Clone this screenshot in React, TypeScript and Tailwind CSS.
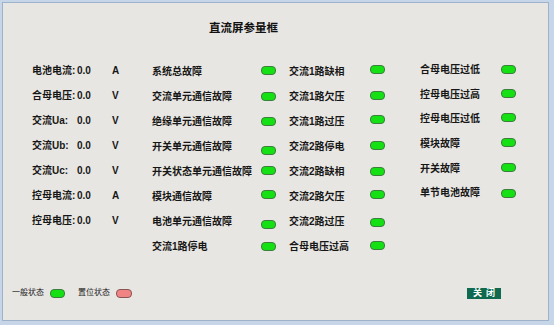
import React from "react";

const font = { fontFamily: '"Liberation Sans", "Noto Sans CJK SC", sans-serif' };

type Led = { label: string; off: string };

const offCls: Record<string, string> = {
  "-2": "-translate-y-[2px]",
  "-1": "-translate-y-[1px]",
  "0": "",
  "1": "translate-y-[1px]",
  "3": "translate-y-[3px]",
  "4": "translate-y-[4px]",
};

const col1 = [
  ["电池电流:", "0.0", "A"],
  ["合母电压:", "0.0", "V"],
  ["交流Ua:", "0.0", "V"],
  ["交流Ub:", "0.0", "V"],
  ["交流Uc:", "0.0", "V"],
  ["控母电流:", "0.0", "A"],
  ["控母电压:", "0.0", "V"],
];

const col2: Led[] = [
  { label: "系统总故障", off: "-1" },
  { label: "交流单元通信故障", off: "0" },
  { label: "绝缘单元通信故障", off: "0" },
  { label: "开关单元通信故障", off: "4" },
  { label: "开关状态单元通信故障", off: "-1" },
  { label: "模块通信故障", off: "-2" },
  { label: "电池单元通信故障", off: "3" },
  { label: "交流1路停电", off: "0" },
];

const col3: Led[] = [
  { label: "交流1路缺相", off: "-2" },
  { label: "交流1路欠压", off: "-1" },
  { label: "交流1路过压", off: "-2" },
  { label: "交流2路停电", off: "-1" },
  { label: "交流2路缺相", off: "0" },
  { label: "交流2路欠压", off: "-2" },
  { label: "交流2路过压", off: "1" },
  { label: "合母电压过高", off: "-1" },
];

const col4: Led[] = [
  { label: "合母电压过低", off: "-1" },
  { label: "控母电压过高", off: "-1" },
  { label: "控母电压过低", off: "-2" },
  { label: "模块故障", off: "-2" },
  { label: "开关故障", off: "-1" },
  { label: "单节电池故障", off: "0" },
];

function GreenLed({ cls = "" }: { cls?: string }) {
  return (
    <div
      className={
        "shrink-0 w-[15px] h-[9px] rounded-[4px] bg-[#14e014] border border-[#3c7f3c] " + cls
      }
    />
  );
}

function LedColumn({
  items,
  labelW,
  width,
  rowH,
}: {
  items: Led[];
  labelW: string;
  width: string;
  rowH: string;
}) {
  return (
    <div className={"flex flex-col " + width}>
      {items.map((it) => (
        <div key={it.label} className={"flex items-center " + rowH}>
          <div className={"shrink-0 text-[10px] leading-[12px] font-semibold text-[#161616] whitespace-nowrap " + labelW}>
            {it.label}
          </div>
          <GreenLed cls={offCls[it.off]} />
        </div>
      ))}
    </div>
  );
}

export default function App() {
  return (
    <div
      className="w-[554px] h-[325px] bg-[#c6d6e8] pl-[2px] pt-[2px] pr-[5px] pb-[4px]"
      style={font}
    >
      <div className="w-full h-full border border-[#9eb3cb] bg-[#e8e6e2] flex flex-col">
        <div className="mt-[18px] h-[14px] pl-[206px] text-[11.5px] leading-[14px] font-bold text-[#111]">
          直流屏参量框
        </div>

        <div className="mt-[23px] h-[205px] flex pl-[29px]">
          <div className="flex flex-col w-[120px] shrink-0">
            {col1.map(([l, v, u]) => (
              <div key={l} className="flex items-center h-[25px] text-[10px] leading-[12px] font-semibold text-[#161616]">
                <div className="w-[45px] shrink-0 whitespace-nowrap">{l}</div>
                <div className="w-[35px] shrink-0">{v}</div>
                <div>{u}</div>
              </div>
            ))}
          </div>
          <div className="mt-[1px] shrink-0">
            <LedColumn items={col2} labelW="w-[109px]" width="w-[137px]" rowH="h-[25px]" />
          </div>
          <div className="mt-[1px] shrink-0">
            <LedColumn items={col3} labelW="w-[81px]" width="w-[131px]" rowH="h-[25px]" />
          </div>
          <div className="shrink-0">
            <LedColumn items={col4} labelW="w-[81px]" width="w-[100px]" rowH="h-[24.6px]" />
          </div>
        </div>

        <div className="mt-[23px] h-[14px] flex items-center pl-[9px]">
          <div className="shrink-0 text-[8px] leading-[10px] text-[#222] w-[38px] whitespace-nowrap">一般状态</div>
          <GreenLed />
          <div className="shrink-0 ml-[13px] text-[8px] leading-[10px] text-[#222] w-[38px] whitespace-nowrap">置位状态</div>
          <div className="shrink-0 w-[16px] h-[9px] rounded-[4px] bg-[#f08484] border border-[#8a5555]" />
          <div className="shrink-0 ml-auto mr-[47px] w-[34px] h-[11px] bg-[#0f6a4f] text-white text-[9px] leading-[11px] flex items-center justify-center font-semibold tracking-[4px] pl-[4px]">
            关闭
          </div>
        </div>
      </div>
    </div>
  );
}
